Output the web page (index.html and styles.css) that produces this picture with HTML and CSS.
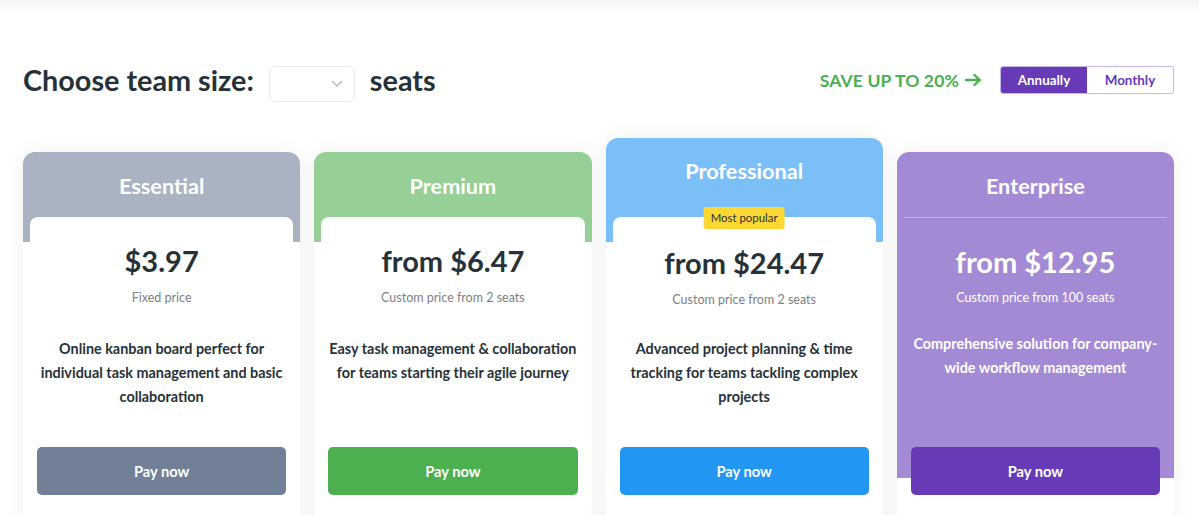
FILE: index.html
```html
<!DOCTYPE html>
<html lang="en">
<head>
<meta charset="utf-8">
<title>Pricing</title>
<link rel="stylesheet" href="styles.css">
</head>
<body>
<div class="page">
  <div class="toolbar">
    <div class="team">
      <h1 class="team-title">Choose team size:</h1>
      <div class="select">
        <svg class="chev" width="12" height="8" viewBox="0 0 12 8"><path d="M1.5 1.5 L6 6 L10.5 1.5" fill="none" stroke="#b0b4ba" stroke-width="1.4" stroke-linecap="round" stroke-linejoin="round"/></svg>
      </div>
      <span class="team-title">seats</span>
    </div>
    <div class="billing">
      <span class="save">SAVE UP TO 20%
        <svg class="arrow" width="17" height="14" viewBox="0 0 17 14"><path d="M1 7 H14.5 M9.5 2 L14.8 7 L9.5 12" fill="none" stroke="#4caf50" stroke-width="2.4" stroke-linecap="round" stroke-linejoin="round"/></svg>
      </span>
      <div class="toggle">
        <span class="toggle-opt toggle-opt--active">Annually</span>
        <span class="toggle-opt">Monthly</span>
      </div>
    </div>
  </div>

  <div class="cards">
    <div class="card card--essential">
      <div class="card-head"><h2 class="card-title">Essential</h2></div>
      <div class="card-body">
        <div class="price">$3.97</div>
        <div class="price-note">Fixed price</div>
        <p class="desc">Online kanban board perfect for individual task management and basic collaboration</p>
        <button class="pay">Pay now</button>
      </div>
    </div>

    <div class="card card--premium">
      <div class="card-head"><h2 class="card-title">Premium</h2></div>
      <div class="card-body">
        <div class="price">from $6.47</div>
        <div class="price-note">Custom price from 2 seats</div>
        <p class="desc">Easy task management &amp; collaboration for teams starting their agile journey</p>
        <button class="pay">Pay now</button>
      </div>
    </div>

    <div class="card card--pro">
      <div class="card-head"><h2 class="card-title">Professional</h2></div>
      <div class="card-body">
        <span class="badge">Most popular</span>
        <div class="price">from $24.47</div>
        <div class="price-note">Custom price from 2 seats</div>
        <p class="desc">Advanced project planning &amp; time tracking for teams tackling complex projects</p>
        <button class="pay">Pay now</button>
      </div>
    </div>

    <div class="card card--enterprise">
      <div class="card-head"><h2 class="card-title">Enterprise</h2></div>
      <div class="card-body">
        <div class="price">from $12.95</div>
        <div class="price-note">Custom price from 100 seats</div>
        <p class="desc">Comprehensive solution for company-wide workflow management</p>
        <button class="pay">Pay now</button>
      </div>
    </div>
  </div>
</div>
</body>
</html>
```

FILE: styles.css
```css
* { box-sizing: border-box; }

html, body { height: 100%; }

body {
  margin: 0;
  font-family: Lato, "Open Sans", "Liberation Sans", sans-serif;
  color: #263238;
  background: #fff linear-gradient(#f5f5f5 0, #ffffff 14px) no-repeat;
  overflow: hidden;
}

.page {
  padding: 60px 25px 0 23px;
}

.toolbar {
  height: 40px;
  display: flex;
  align-items: center;
  justify-content: space-between;
}

.team {
  display: flex;
  align-items: center;
}

.team-title {
  margin: 0;
  font-size: 28.8px;
  font-weight: 700;
  line-height: 36px;
  color: #263238;
}

.select {
  width: 86px;
  height: 36px;
  margin: 7px 15px 0;
  border: 1px solid #e7e8ee;
  border-radius: 5px;
  background: #fff;
  display: flex;
  align-items: center;
  justify-content: flex-end;
  padding-right: 11px;
}

.billing {
  display: flex;
  align-items: center;
  gap: 18px;
}

.save {
  display: flex;
  align-items: center;
  gap: 6px;
  font-size: 17.6px;
  font-weight: 700;
  color: #4caf50;
  letter-spacing: 0.1px;
}

.toggle {
  display: flex;
  width: 174px;
  height: 28px;
  border: 1px solid #c8b6ea;
  border-radius: 3px;
  overflow: hidden;
}

.toggle-opt {
  flex: 1;
  display: flex;
  align-items: center;
  justify-content: center;
  font-size: 13.4px;
  font-weight: 700;
  color: #673ab7;
}

.toggle-opt--active {
  background: #673ab7;
  color: #fff;
}

.cards {
  margin-top: 38px;
  display: grid;
  grid-template-columns: repeat(4, 1fr);
  gap: 14px;
  align-items: start;
}

.card {
  margin-top: 14px;
  height: 420px;
  background: #fff;
  border-radius: 12px 12px 0 0;
  box-shadow: 0 0 22px rgba(0, 0, 0, 0.06);
}

.card-head {
  height: 90px;
  padding-top: 22px;
  border-radius: 12px 12px 0 0;
}

.card-title {
  margin: 0;
  text-align: center;
  color: #fff;
  font-size: 21.7px;
  line-height: 24px;
  font-weight: 700;
}

.card-body {
  position: relative;
  margin: -25px 7px 0;
  padding: 27px 7px 0;
  background: #fff;
  border-radius: 8px 8px 0 0;
  text-align: center;
}

.price {
  font-size: 29px;
  line-height: 34px;
  font-weight: 700;
  color: #263238;
}

.price-note {
  margin-top: 12px;
  font-size: 12.5px;
  line-height: 16px;
  color: #7c7f84;
}

.desc {
  margin: 31px 0 0;
  height: 72px;
  font-size: 14.4px;
  line-height: 24px;
  font-weight: 700;
  color: #263238;
}

.pay {
  display: block;
  width: 100%;
  height: 48px;
  margin-top: 38px;
  border: 0;
  border-radius: 5px;
  font-family: inherit;
  font-size: 14.7px;
  font-weight: 700;
  color: #fff;
}

.card--essential .card-head { background: #a9b3c1; }
.card--essential .pay { background: #718097; }

.card--premium .card-head { background: #96d096; }
.card--premium .pay { background: #4caf50; }

.card--pro { margin-top: 0; height: 434px; }
.card--pro .card-head { height: 104px; padding-top: 21px; background: #7bbff8; }
.card--pro .card-body { padding-top: 29px; }
.card--pro .price-note { margin-top: 12px; }
.card--pro .desc { margin-top: 29px; }
.card--pro .pay { background: #2196f3; }

.badge {
  position: absolute;
  top: -10px;
  left: 50%;
  transform: translateX(-50%);
  padding: 0 7px;
  height: 22px;
  line-height: 22px;
  border-radius: 3px;
  background: #fdd835;
  color: #263238;
  font-size: 11.4px;
  font-weight: 400;
  white-space: nowrap;
}

.card--enterprise {
  background: linear-gradient(#a48ad4 0, #a48ad4 326px, #fff 326px);
}
.card--enterprise .card-head { background: transparent; height: 65px; }
.card--enterprise .card-body {
  margin-top: 0;
  background: transparent;
  border-radius: 0;
  border-top: 1px solid rgba(255, 255, 255, 0.35);
  padding-top: 27px;
}
.card--enterprise .price,
.card--enterprise .price-note,
.card--enterprise .desc { color: #fff; }
.card--enterprise .price-note { margin-top: 11px; }
.card--enterprise .desc { margin-top: 26px; height: 48px; }
.card--enterprise .pay { background: #673ab7; margin-top: 67px; }
```
